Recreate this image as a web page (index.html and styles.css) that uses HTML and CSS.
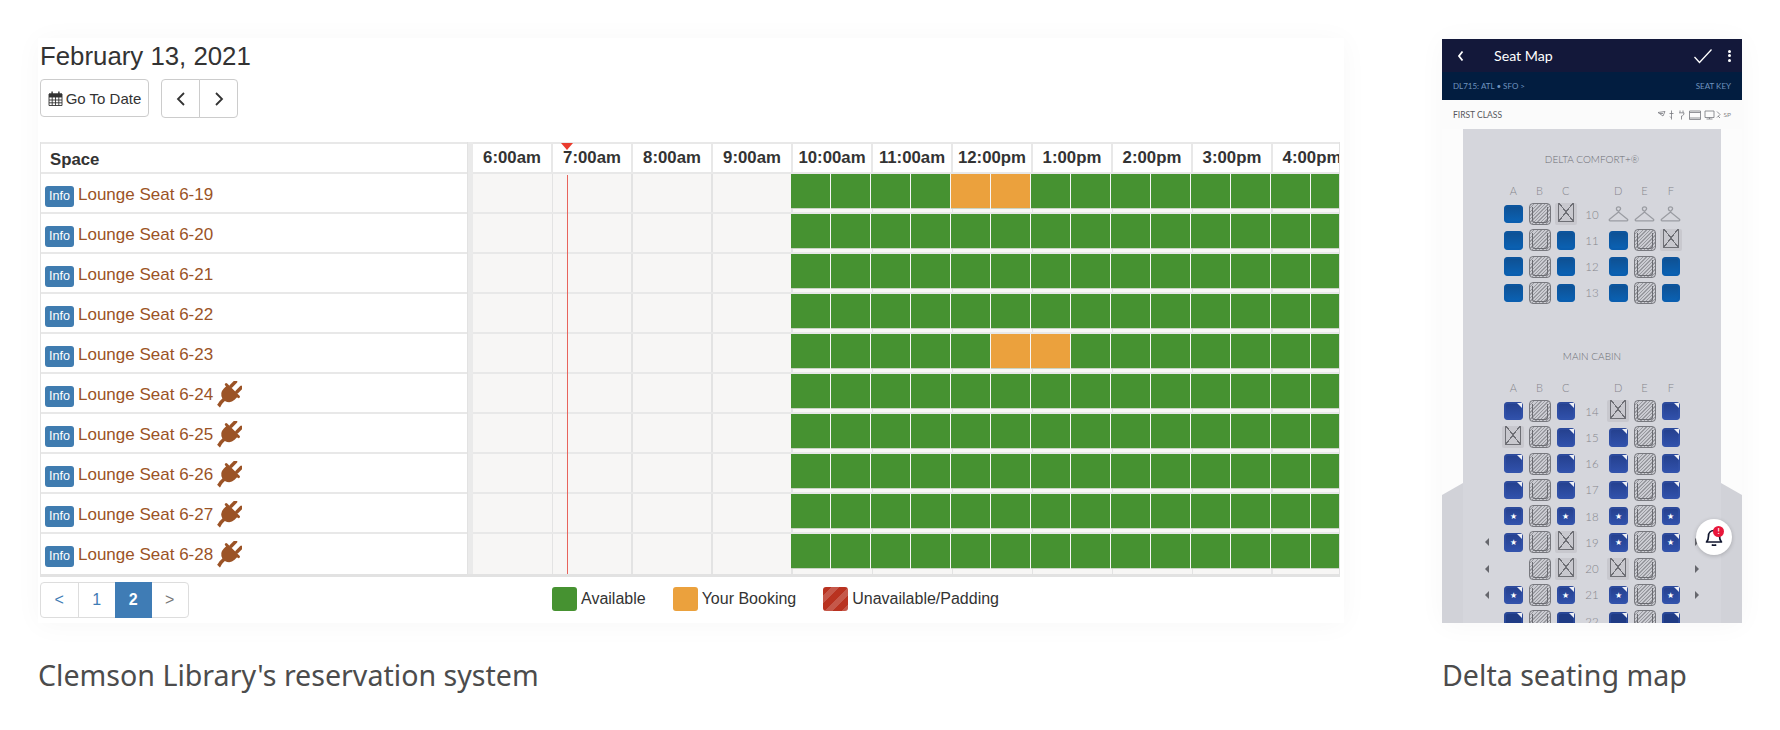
FILE: index.html
```html
<!DOCTYPE html>
<html lang="en">
<head>
  <meta charset="UTF-8">
  <title>Seat reservation examples</title>
  <link rel="stylesheet" href="styles.css">
</head>
<body>
  <svg class="defs" width="0" height="0">
    <symbol id="plug" viewBox="0 0 24 24">
      <g transform="rotate(45 12 12)" fill="#9b5326">
        <rect x="7" y="-2" width="3" height="8" rx="1.2"/>
        <rect x="14" y="-2" width="3" height="8" rx="1.2"/>
        <path d="M4.5 5.5h15a1 1 0 0 1 0 2.4h-.6v3a7 7 0 0 1-5.2 6.6V20c0 1.8 1 3 1 4.500h-3.400c0-1.500-.6-2.700-.6-4.500v-2.500a7 7 0 0 1-5.100-6.600v-3h-1.100a1.200 1.200 0 0 1 0-2.400z"/>
      </g>
    </symbol>
    <symbol id="hanger" viewBox="0 0 20 20">
      <path d="M10 6.500c-1.500 0-2-.8-2-1.900 0-1.100.9-1.900 2-1.900s2 .8 2 1.900c0 1.200-2 1.500-2 3.100M10 7.700 1.500 14.500c-.7.600-.3 1.500.5 1.500h16c.8 0 1.200-.9.500-1.500L10 7.700z" fill="none" stroke="#9a9ca2" stroke-width="1.2"/>
    </symbol>
  </svg>

  <main class="page">
    <!-- Library schedule -->
    <figure class="figure figure-wide">
      <div class="shot shot-schedule">
        <h1 class="date">February 13, 2021</h1>
        <div class="toolbar">
          <button class="btn btn-date">
            <svg class="cal" width="15" height="15" viewBox="0 0 15 15"><path d="M1 3h13v11.500H1zM1 6h13M1 9h13M1 11.800h13M4.200 6v8.500M7.500 6v8.500M10.800 6v8.500" fill="none" stroke="#333" stroke-width=".9"/><path d="M1 2.500h13V6H1zM3.400 .5h1.400v3H3.400zM10.200 .5h1.400v3h-1.400z" fill="#333"/></svg>
            Go To Date
          </button>
          <div class="btn-group">
            <button class="btn btn-nav"><svg width="12" height="16" viewBox="0 0 12 16"><path d="M9 2 3 8l6 6" fill="none" stroke="#333" stroke-width="1.8"/></svg></button>
            <button class="btn btn-nav"><svg width="12" height="16" viewBox="0 0 12 16"><path d="m3 2 6 6-6 6" fill="none" stroke="#333" stroke-width="1.8"/></svg></button>
          </div>
        </div>

        <div class="sched">
          <div class="space-col">
            <div class="space-head">Space</div>
            <div class="space-row"><span class="info">Info</span><a class="space-name">Lounge Seat 6-19</a></div>
            <div class="space-row"><span class="info">Info</span><a class="space-name">Lounge Seat 6-20</a></div>
            <div class="space-row"><span class="info">Info</span><a class="space-name">Lounge Seat 6-21</a></div>
            <div class="space-row"><span class="info">Info</span><a class="space-name">Lounge Seat 6-22</a></div>
            <div class="space-row"><span class="info">Info</span><a class="space-name">Lounge Seat 6-23</a></div>
            <div class="space-row"><span class="info">Info</span><a class="space-name">Lounge Seat 6-24</a><svg class="plug"><use href="#plug"/></svg></div>
            <div class="space-row"><span class="info">Info</span><a class="space-name">Lounge Seat 6-25</a><svg class="plug"><use href="#plug"/></svg></div>
            <div class="space-row"><span class="info">Info</span><a class="space-name">Lounge Seat 6-26</a><svg class="plug"><use href="#plug"/></svg></div>
            <div class="space-row"><span class="info">Info</span><a class="space-name">Lounge Seat 6-27</a><svg class="plug"><use href="#plug"/></svg></div>
            <div class="space-row"><span class="info">Info</span><a class="space-name">Lounge Seat 6-28</a><svg class="plug"><use href="#plug"/></svg></div>
          </div>

          <div class="time-col">
            <div class="now-mark"></div>
            <div class="now-line"></div>
            <div class="time-head">
              <div class="hour">6:00am</div><div class="hour">7:00am</div><div class="hour">8:00am</div><div class="hour">9:00am</div><div class="hour">10:00am</div><div class="hour">11:00am</div><div class="hour">12:00pm</div><div class="hour">1:00pm</div><div class="hour">2:00pm</div><div class="hour">3:00pm</div><div class="hour">4:00pm</div>
            </div>
            <div class="time-row">
              <div class="slot"></div><div class="slot"></div><div class="slot"></div><div class="slot"></div><div class="slot booked"></div><div class="slot booked"></div><div class="slot"></div><div class="slot"></div><div class="slot"></div><div class="slot"></div><div class="slot"></div><div class="slot"></div><div class="slot"></div><div class="slot"></div>
            </div>
            <div class="time-row">
              <div class="slot"></div><div class="slot"></div><div class="slot"></div><div class="slot"></div><div class="slot"></div><div class="slot"></div><div class="slot"></div><div class="slot"></div><div class="slot"></div><div class="slot"></div><div class="slot"></div><div class="slot"></div><div class="slot"></div><div class="slot"></div>
            </div>
            <div class="time-row">
              <div class="slot"></div><div class="slot"></div><div class="slot"></div><div class="slot"></div><div class="slot"></div><div class="slot"></div><div class="slot"></div><div class="slot"></div><div class="slot"></div><div class="slot"></div><div class="slot"></div><div class="slot"></div><div class="slot"></div><div class="slot"></div>
            </div>
            <div class="time-row">
              <div class="slot"></div><div class="slot"></div><div class="slot"></div><div class="slot"></div><div class="slot"></div><div class="slot"></div><div class="slot"></div><div class="slot"></div><div class="slot"></div><div class="slot"></div><div class="slot"></div><div class="slot"></div><div class="slot"></div><div class="slot"></div>
            </div>
            <div class="time-row">
              <div class="slot"></div><div class="slot"></div><div class="slot"></div><div class="slot"></div><div class="slot"></div><div class="slot booked"></div><div class="slot booked"></div><div class="slot"></div><div class="slot"></div><div class="slot"></div><div class="slot"></div><div class="slot"></div><div class="slot"></div><div class="slot"></div>
            </div>
            <div class="time-row">
              <div class="slot"></div><div class="slot"></div><div class="slot"></div><div class="slot"></div><div class="slot"></div><div class="slot"></div><div class="slot"></div><div class="slot"></div><div class="slot"></div><div class="slot"></div><div class="slot"></div><div class="slot"></div><div class="slot"></div><div class="slot"></div>
            </div>
            <div class="time-row">
              <div class="slot"></div><div class="slot"></div><div class="slot"></div><div class="slot"></div><div class="slot"></div><div class="slot"></div><div class="slot"></div><div class="slot"></div><div class="slot"></div><div class="slot"></div><div class="slot"></div><div class="slot"></div><div class="slot"></div><div class="slot"></div>
            </div>
            <div class="time-row">
              <div class="slot"></div><div class="slot"></div><div class="slot"></div><div class="slot"></div><div class="slot"></div><div class="slot"></div><div class="slot"></div><div class="slot"></div><div class="slot"></div><div class="slot"></div><div class="slot"></div><div class="slot"></div><div class="slot"></div><div class="slot"></div>
            </div>
            <div class="time-row">
              <div class="slot"></div><div class="slot"></div><div class="slot"></div><div class="slot"></div><div class="slot"></div><div class="slot"></div><div class="slot"></div><div class="slot"></div><div class="slot"></div><div class="slot"></div><div class="slot"></div><div class="slot"></div><div class="slot"></div><div class="slot"></div>
            </div>
            <div class="time-row">
              <div class="slot"></div><div class="slot"></div><div class="slot"></div><div class="slot"></div><div class="slot"></div><div class="slot"></div><div class="slot"></div><div class="slot"></div><div class="slot"></div><div class="slot"></div><div class="slot"></div><div class="slot"></div><div class="slot"></div><div class="slot"></div>
            </div>
          </div>
        </div>

        <div class="sched-foot">
          <ul class="pager">
            <li class="page-item">&lt;</li>
            <li class="page-item">1</li>
            <li class="page-item active">2</li>
            <li class="page-item muted">&gt;</li>
          </ul>
          <ul class="legend">
            <li class="legend-item"><span class="swatch swatch-free"></span>Available</li>
            <li class="legend-item"><span class="swatch swatch-booked"></span>Your Booking</li>
            <li class="legend-item"><span class="swatch swatch-padding"></span>Unavailable/Padding</li>
          </ul>
        </div>
      </div>
      <figcaption class="caption">Clemson Library's reservation system</figcaption>
    </figure>

    <!-- Phone seat map -->
    <figure class="figure figure-phone">
      <div class="shot shot-phone">
        <div class="app-bar">
          <svg class="app-back" width="8" height="12" viewBox="0 0 8 12"><path d="M5.500 1.500 2 6l3.500 4.500" fill="none" stroke="#fff" stroke-width="1.8"/></svg>
          <span class="app-title">Seat Map</span>
          <svg class="app-check" width="20" height="16" viewBox="0 0 20 16"><path d="m1.500 9 5 5.500L18.500 1.500" fill="none" stroke="#fff" stroke-width="1.3"/></svg>
          <span class="app-dots"><i></i><i></i><i></i></span>
        </div>
        <div class="sub-bar"><span>DL715: ATL • SFO &gt;</span><span>SEAT KEY</span></div>
        <div class="class-bar">
          <span>FIRST CLASS</span>
          <span class="amenities">
            <svg width="64" height="10" viewBox="0 0 64 10"><g fill="none" stroke="#77797f" stroke-width=".8"><path d="M0 2.500 7 1.500 5 6zM2 3.500h3"/><path d="M13.500 .5v9M11.500 3.500h4M12 6.500l1.500 1.500"/><path d="M22 .5v2M25 .5v2M21 2.800h5c0 2-1 3-2.500 3.200v3.500"/><path d="M31.500 1h11v8.500h-11zM31.500 2.500h11M31.500 8h11"/><path d="M47 1h9v6.500h-9zM48.500 9h6M51.500 7.500V9"/><path d="M59 1.500l3 3-3 3M62 8l-2-2"/></g></svg>
            <span class="sp">SP</span>
          </span>
        </div>
        <div class="cabin">
          <div class="wing wing-left"></div>
          <div class="wing wing-right"></div>
          <div class="fuselage">
            <div class="cabin-title">DELTA COMFORT+®</div>
            <div class="seat-grid">
              <span></span><b class="col">A</b><b class="col">B</b><b class="col">C</b><span></span><b class="col">D</b><b class="col">E</b><b class="col">F</b><span></span>

              <span></span><i class="seat comfort"></i><i class="seat taken"></i><i class="seat blocked"></i><b class="num">10</b><svg class="hanger"><use href="#hanger"/></svg><svg class="hanger"><use href="#hanger"/></svg><svg class="hanger"><use href="#hanger"/></svg><span></span>
              <span></span><i class="seat comfort"></i><i class="seat taken"></i><i class="seat comfort"></i><b class="num">11</b><i class="seat comfort"></i><i class="seat taken"></i><i class="seat blocked"></i><span></span>
              <span></span><i class="seat comfort"></i><i class="seat taken"></i><i class="seat comfort"></i><b class="num">12</b><i class="seat comfort"></i><i class="seat taken"></i><i class="seat comfort"></i><span></span>
              <span></span><i class="seat comfort"></i><i class="seat taken"></i><i class="seat comfort"></i><b class="num">13</b><i class="seat comfort"></i><i class="seat taken"></i><i class="seat comfort"></i><span></span>
            </div>

            <div class="cabin-title cabin-title-main">MAIN CABIN</div>
            <div class="seat-grid">
              <span></span><b class="col">A</b><b class="col">B</b><b class="col">C</b><span></span><b class="col">D</b><b class="col">E</b><b class="col">F</b><span></span>

              <span></span><i class="seat main corner"></i><i class="seat taken"></i><i class="seat main corner"></i><b class="num">14</b><i class="seat blocked"></i><i class="seat taken"></i><i class="seat main corner"></i><span></span>
              <span></span><i class="seat blocked"></i><i class="seat taken"></i><i class="seat main corner"></i><b class="num">15</b><i class="seat main corner"></i><i class="seat taken"></i><i class="seat main corner"></i><span></span>
              <span></span><i class="seat main corner"></i><i class="seat taken"></i><i class="seat main corner"></i><b class="num">16</b><i class="seat main corner"></i><i class="seat taken"></i><i class="seat main corner"></i><span></span>
              <span></span><i class="seat main corner"></i><i class="seat taken"></i><i class="seat main corner"></i><b class="num">17</b><i class="seat main corner"></i><i class="seat taken"></i><i class="seat main corner"></i><span></span>
              <span></span><i class="seat main">★</i><i class="seat taken"></i><i class="seat main">★</i><b class="num">18</b><i class="seat main">★</i><i class="seat taken"></i><i class="seat main">★</i><span></span>
              <em class="exit exit-left"></em><i class="seat main corner">★</i><i class="seat taken"></i><i class="seat blocked"></i><b class="num">19</b><i class="seat main corner">★</i><i class="seat taken"></i><i class="seat main corner">★</i><em class="exit exit-right"></em>
              <em class="exit exit-left"></em><span></span><i class="seat taken"></i><i class="seat blocked"></i><b class="num">20</b><i class="seat blocked"></i><i class="seat taken"></i><span></span><em class="exit exit-right"></em>
              <em class="exit exit-left"></em><i class="seat main corner">★</i><i class="seat taken"></i><i class="seat main corner">★</i><b class="num">21</b><i class="seat main corner">★</i><i class="seat taken"></i><i class="seat main corner">★</i><em class="exit exit-right"></em>
              <span></span><i class="seat main dark corner"></i><i class="seat taken"></i><i class="seat main dark corner"></i><b class="num">22</b><i class="seat main dark corner"></i><i class="seat taken"></i><i class="seat main dark corner"></i><span></span>
            </div>
          </div>
          <div class="bell">
            <svg width="18" height="20" viewBox="0 0 18 20"><path d="M1.500 15c1.500-1.500 2-3 2-6 0-3.200 2.200-5.500 5.500-5.500S14.500 5.800 14.500 9c0 3 .5 4.500 2 6zM7 17.500c.5 1 3.500 1 4 0" fill="none" stroke="#10162e" stroke-width="1.7" stroke-linejoin="round"/></svg>
            <span class="bell-badge">!</span>
          </div>
        </div>
      </div>
      <figcaption class="caption">Delta seating map</figcaption>
    </figure>
  </main>
</body>
</html>
```

FILE: styles.css
```css
/* Page */
body {
  margin: 0;
  background: #fff;
  font-family: "Liberation Sans", Arial, sans-serif;
  color: #333;
  overflow: hidden;
}
.defs {
  position: absolute;
}
.page {
  display: flex;
  padding: 38px 0 0 38px;
}
.figure {
  margin: 0;
}
.figure-wide {
  width: 1306px;
}
.figure-phone {
  width: 300px;
  margin-left: 98px;
}
.shot {
  height: 585px;
  box-shadow: 0 2px 26px rgba(0, 0, 0, 0.035);
  overflow: hidden;
}
.caption {
  margin: 32px 0 0;
  font-family: "Noto Sans", sans-serif;
  font-size: 28.6px;
  line-height: 40px;
  color: #4c4c4c;
}

/* Schedule header */
.shot-schedule {
  padding: 3px 0 0 2px;
  box-sizing: border-box;
}
.date {
  margin: 0;
  font-size: 25.8px;
  line-height: 30px;
  font-weight: 400;
}
.toolbar {
  display: flex;
  align-items: flex-start;
  gap: 12px;
  margin: 8px 0 24px;
}
.btn {
  display: flex;
  align-items: center;
  justify-content: center;
  background: #fff;
  border: 1px solid #ccc;
  border-radius: 4px;
  font: inherit;
  font-size: 15px;
  color: #333;
  padding: 0;
}
.btn-date {
  width: 109px;
  height: 38px;
  gap: 3px;
}
.btn-group {
  display: flex;
}
.btn-nav {
  width: 39px;
  height: 39px;
}
.btn-nav:first-child {
  border-radius: 4px 0 0 4px;
}
.btn-nav:last-child {
  border-radius: 0 4px 4px 0;
  margin-left: -1px;
}

/* Schedule table */
.sched {
  display: flex;
  width: 1300px;
  border-bottom: 3px solid #e2e2e2;
}
.space-col {
  width: 428px;
  flex: none;
  box-sizing: border-box;
  border-left: 1px solid #e2e2e2;
  border-right: 1px solid #e2e2e2;
}
.space-head {
  height: 32px;
  box-sizing: border-box;
  border-top: 2px solid #e8e8e8;
  border-bottom: 2px solid #e8e8e8;
  padding: 6px 0 0 9px;
  font-size: 16.8px;
  line-height: 20px;
  font-weight: 700;
}
.space-row {
  display: flex;
  align-items: center;
  height: 40px;
  box-sizing: border-box;
  border-bottom: 2px solid #e8e8e8;
  padding: 3px 0 0 4px;
}
.space-row:last-child {
  border-bottom: 0;
  padding-top: 1px;
}
.info {
  width: 29px;
  height: 21px;
  margin: 3px 4px 0 0;
  background: #3f7cb0;
  border-radius: 3px;
  font-size: 12.6px;
  line-height: 21px;
  text-align: center;
  color: #fff;
}
.space-name {
  font-size: 17px;
  color: #9b5326;
}
.plug {
  width: 28px;
  height: 28px;
  margin: 0 0 0 1px;
}
.time-col {
  position: relative;
  width: 872px;
  border-left: 5px solid #eaeaea;
  box-sizing: border-box;
  overflow: hidden;
  border-right: 1px solid #e2e2e2;
}
.time-head {
  display: flex;
  height: 32px;
  box-sizing: border-box;
  border-top: 2px solid #e8e8e8;
  border-bottom: 2px solid #e8e8e8;
}
.hour {
  flex: none;
  width: 80px;
  box-sizing: border-box;
  border-right: 2px solid #e8e8e8;
  padding-top: 4px;
  font-size: 16.8px;
  line-height: 20px;
  font-weight: 700;
  text-align: center;
}
.time-row {
  display: flex;
  height: 40px;
  box-sizing: border-box;
  border-bottom: 2px solid #e8e8e8;
  padding-left: 318px;
  background: repeating-linear-gradient(90deg, #f7f6f5 0 78.5px, #e3e3e3 78.5px 80px);
}
.time-row:last-child {
  border-bottom: 0;
}
.slot {
  flex: none;
  width: 39px;
  height: 34px;
  margin-right: 1px;
  background: #469231;
  box-shadow: 0 1px 0 #c9d3c4;
}
.slot.booked {
  background: #eba13d;
}
.now-mark {
  position: absolute;
  left: 88px;
  top: 1px;
  border: 6px solid transparent;
  border-top: 7px solid #ea3c2e;
  border-bottom: 0;
}
.now-line {
  position: absolute;
  left: 94px;
  top: 33px;
  bottom: 0;
  width: 1px;
  background: #e8645c;
  z-index: 1;
}

/* Schedule footer */
.sched-foot {
  display: flex;
  align-items: center;
  margin-top: 5px;
}
.pager {
  display: flex;
  list-style: none;
  margin: 0;
  padding: 0;
  width: 149px;
  height: 36px;
  box-sizing: border-box;
  border: 1px solid #ddd;
  border-radius: 4px;
  font-size: 16px;
}
.page-item {
  flex: 1;
  text-align: center;
  line-height: 34px;
  color: #3f7cb5;
  border-left: 1px solid #ddd;
}
.page-item:first-child {
  border-left: 0;
}
.page-item.active {
  margin: -1px 0;
  border-left: 0;
  background: #3f7cb5;
  line-height: 36px;
  color: #fff;
  font-weight: 700;
}
.page-item.muted {
  border-left: 0;
  color: #777;
}
.legend {
  display: flex;
  gap: 27px;
  list-style: none;
  margin: -2px 0 0 363px;
  padding: 0;
  font-size: 16px;
  color: #333;
}
.legend-item {
  display: flex;
  align-items: center;
  gap: 4px;
}
.swatch {
  width: 25px;
  height: 24px;
  border-radius: 3px;
}
.swatch-free {
  background: #469231;
}
.swatch-booked {
  background: #eba13d;
}
.swatch-padding {
  background: repeating-linear-gradient(135deg, #b93220 0 6px, #c5584a 6px 12px);
}

/* Phone app chrome */
.shot-phone {
  display: flex;
  flex-direction: column;
  padding-top: 1px;
  box-sizing: border-box;
  font-family: Lato, sans-serif;
  background: #fcfcfc;
}
.app-bar {
  display: flex;
  align-items: center;
  flex: none;
  height: 33px;
  padding: 0 11px 0 15px;
  background: #13183a;
  color: #fff;
}
.app-title {
  margin-left: 29px;
  font-size: 14.2px;
}
.app-check {
  margin-left: auto;
}
.app-dots {
  display: flex;
  flex-direction: column;
  gap: 1.5px;
  margin-left: 15px;
}
.app-dots i {
  width: 3px;
  height: 3px;
  background: #fff;
  border-radius: 50%;
}
.sub-bar {
  display: flex;
  justify-content: space-between;
  align-items: center;
  flex: none;
  height: 28px;
  padding: 0 11px;
  background: #021d40;
  color: #6f93bf;
  font-size: 8px;
}
.class-bar {
  display: flex;
  justify-content: space-between;
  align-items: center;
  flex: none;
  height: 29px;
  padding: 0 11px;
  background: #fbfbfb;
  color: #55575c;
  font-size: 8.5px;
}
.amenities {
  display: flex;
  align-items: center;
  gap: 2px;
}
.sp {
  font-size: 6.5px;
  color: #888;
}

/* Cabin */
.cabin {
  position: relative;
  flex: 1;
  overflow: hidden;
}
.wing {
  position: absolute;
  top: 354px;
  bottom: 0;
  width: 21px;
  background: #d1d2d8;
}
.wing-left {
  left: 0;
  clip-path: polygon(0 12px, 100% 0, 100% 100%, 0 100%);
}
.wing-right {
  right: 0;
  clip-path: polygon(0 0, 100% 12px, 100% 100%, 0 100%);
}
.fuselage {
  height: 100%;
  margin: 0 21px;
  padding-top: 20px;
  box-sizing: border-box;
  background: #d5d6dc;
}
.cabin-title {
  height: 20px;
  margin-bottom: 10px;
  font-size: 10px;
  font-weight: 300;
  line-height: 20px;
  text-align: center;
  color: #6c6d74;
}
.cabin-title-main {
  margin-top: 40px;
}
.seat-grid {
  display: grid;
  grid-template-columns: repeat(9, 26.25px);
  grid-template-rows: 22px;
  grid-auto-rows: 26.25px;
  justify-content: center;
  place-items: center;
}
.col,
.num {
  font-size: 11px;
  font-weight: 300;
  color: #85868d;
}
.num {
  font-size: 11.5px;
}
.hanger {
  width: 21px;
  height: 21px;
}

/* Seats */
.seat {
  display: block;
  position: relative;
  box-sizing: border-box;
  font-style: normal;
}
.comfort,
.main {
  width: 18.5px;
  height: 18.5px;
  border-radius: 4px;
  text-align: center;
  font-size: 8px;
  line-height: 18px;
  color: #fff;
}
.comfort {
  background: linear-gradient(#0f4f90, #0a63b6);
  box-shadow: inset 0 0 0 2px rgba(10, 90, 170, 0.5);
}
.main {
  background: linear-gradient(#243f8c, #3152ad);
  box-shadow: inset 0 0 0 2px rgba(52, 84, 170, 0.5);
}
.main.dark {
  background: #1f3b85;
}
.corner::after {
  content: "";
  position: absolute;
  top: 1px;
  right: 1px;
  border-top: 5px solid #eef0f6;
  border-left: 5px solid transparent;
}
.taken {
  width: 22px;
  height: 22px;
  border: 1px solid #77787e;
  border-radius: 4px;
  background: repeating-linear-gradient(135deg, #98999f 0 1px, #cbccd2 1px 2.5px);
}
.taken::after {
  content: "";
  position: absolute;
  inset: 3px 2px 1px;
  border: 1px solid #6b6c72;
  border-top: 0;
  border-radius: 0 0 3px 3px;
}
.blocked {
  width: 22px;
  height: 22px;
  border-radius: 2px;
  background: #c8c8ce;
}
.blocked::before {
  content: "";
  position: absolute;
  inset: 0 3px 3px;
  border: 1px solid #6e6f75;
  border-top: 0;
  background:
    linear-gradient(to top right, transparent calc(50% - 0.6px), #6e6f75 calc(50% - 0.6px) calc(50% + 0.6px), transparent calc(50% + 0.6px)),
    linear-gradient(to top left, transparent calc(50% - 0.6px), #6e6f75 calc(50% - 0.6px) calc(50% + 0.6px), transparent calc(50% + 0.6px));
}
.exit {
  width: 0;
  height: 0;
  border-top: 4px solid transparent;
  border-bottom: 4px solid transparent;
}
.exit-left {
  border-right: 4px solid #66676d;
}
.exit-right {
  border-left: 4px solid #66676d;
}

/* Notification bell */
.bell {
  position: absolute;
  right: 10px;
  top: 390px;
  display: flex;
  align-items: center;
  justify-content: center;
  width: 36px;
  height: 36px;
  background: #fff;
  border-radius: 50%;
  box-shadow: 0 1px 4px rgba(0, 0, 0, 0.2);
}
.bell-badge {
  position: absolute;
  top: 7px;
  right: 8px;
  width: 11px;
  height: 11px;
  background: #e8173a;
  border-radius: 50%;
  font-size: 8px;
  font-weight: 700;
  line-height: 11px;
  text-align: center;
  color: #fff;
}
```
